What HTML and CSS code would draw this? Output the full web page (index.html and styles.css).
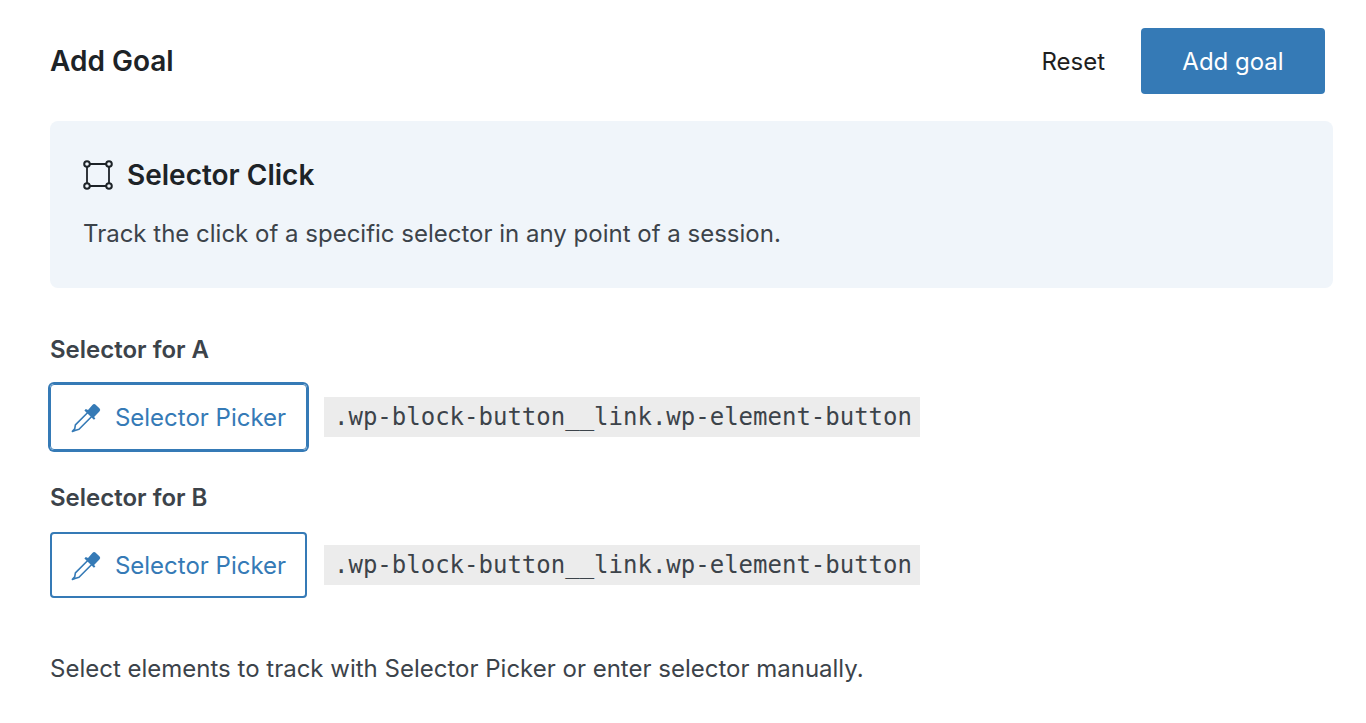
FILE: index.html
```html
<!DOCTYPE html>
<html lang="en">
<head>
<meta charset="utf-8">
<meta name="viewport" content="width=device-width, initial-scale=1">
<title>Add Goal</title>
<link rel="stylesheet" href="styles.css">
</head>
<body>
<svg class="sprite" aria-hidden="true">
  <symbol id="picker" viewBox="0 0 30 30">
    <path d="M17.5 8.8 4.4 21.9 3.7 25.9 1.4 28.4 4 27.4 8 26.3 21.2 13" fill="none" stroke="currentColor" stroke-width="1.6" stroke-linejoin="round"/>
    <path d="M21.4 1.9Q23 .3 24.7 1.7L28.6 5.4Q30 7 28.4 8.6L23.1 13.9 24.4 15.4 22.9 16.8 13.4 7.4 14.8 5.9 17 7.1Z" fill="currentColor"/>
  </symbol>
</svg>
<main class="page">
  <header class="header">
    <h1 class="title">Add Goal</h1>
    <div class="actions">
      <button class="button button-plain" type="button">Reset</button>
      <button class="button button-primary" type="button">Add goal</button>
    </div>
  </header>
  <section class="card">
    <h2 class="card-title">
      <svg class="card-icon" viewBox="0 0 30 30" fill="none" stroke="currentColor" aria-hidden="true">
        <path d="M6.5 4h17M6.5 26h17M4 6.5v17M26 6.5v17" stroke-width="1.8"/>
        <g stroke-width="2"><circle cx="4" cy="4" r="2.8"/><circle cx="26" cy="4" r="2.8"/><circle cx="4" cy="26" r="2.8"/><circle cx="26" cy="26" r="2.8"/></g>
      </svg>
      Selector Click
    </h2>
    <p class="card-text">Track the click of a specific selector in any point of a session.</p>
  </section>
  <section class="field">
    <h3 class="label" id="label-a">Selector for A</h3>
    <div class="row">
      <button class="button button-outline is-focused" type="button" aria-describedby="label-a"><svg class="picker-icon" aria-hidden="true"><use href="#picker"/></svg>Selector Picker</button>
      <code class="code">.wp-block-button__link.wp-element-button</code>
    </div>
  </section>
  <section class="field">
    <h3 class="label" id="label-b">Selector for B</h3>
    <div class="row">
      <button class="button button-outline" type="button" aria-describedby="label-b"><svg class="picker-icon" aria-hidden="true"><use href="#picker"/></svg>Selector Picker</button>
      <code class="code">.wp-block-button__link.wp-element-button</code>
    </div>
  </section>
  <p class="help">Select elements to track with Selector Picker or enter selector manually.</p>
</main>
</body>
</html>
```
FILE: styles.css
```css
* { box-sizing: border-box; }
body { margin: 0; background: #fff; color: #3c434a; font: 24px/32px Inter, "Liberation Sans", sans-serif; }
h1, h2, h3, p { margin: 0; }
.sprite { position: absolute; width: 0; height: 0; }
.page { padding: 28px 33px 36px 50px; }
.header { display: flex; align-items: center; justify-content: space-between; padding-right: 8px; }
.title { color: #1d2327; font-size: 28px; font-weight: 600; }
.actions { display: flex; gap: 12px; }
.button { display: flex; align-items: center; justify-content: center; height: 66px; padding: 2px 24px 0; border: 0; border-radius: 4px; background: none; font: inherit; white-space: nowrap; }
.button-plain { color: #1e1e1e; }
.button-primary { min-width: 184px; background: #357ab6; color: #fff; }
.card { margin-top: 27px; padding: 36px 33px 38px; border-radius: 8px; background: #f0f5fa; }
.card-title { display: flex; align-items: center; gap: 14px; color: #1d2327; font-size: 28px; line-height: 36px; font-weight: 600; }
.card-icon { width: 30px; height: 30px; }
.card-text { margin-top: 25px; }
.field { margin-top: 32px; }
.card + .field { margin-top: 46px; }
.label { font-size: 24px; font-weight: 600; }
.row { display: flex; align-items: center; gap: 17px; margin-top: 18px; }
.button-outline { gap: 14px; min-width: 257px; padding: 2px 18px 0; border: 2px solid #357ab6; color: #357ab6; }
.is-focused { box-shadow: 0 0 0 2px #357ab6; border-width: 1px; }
.picker-icon { flex: none; width: 30px; height: 30px; }
.code { padding: 4px 8px 4px 10px; background: #ececec; font: 24px/32px "DejaVu Sans Mono", "Liberation Mono", monospace; }
.help { margin-top: 55px; }
```
